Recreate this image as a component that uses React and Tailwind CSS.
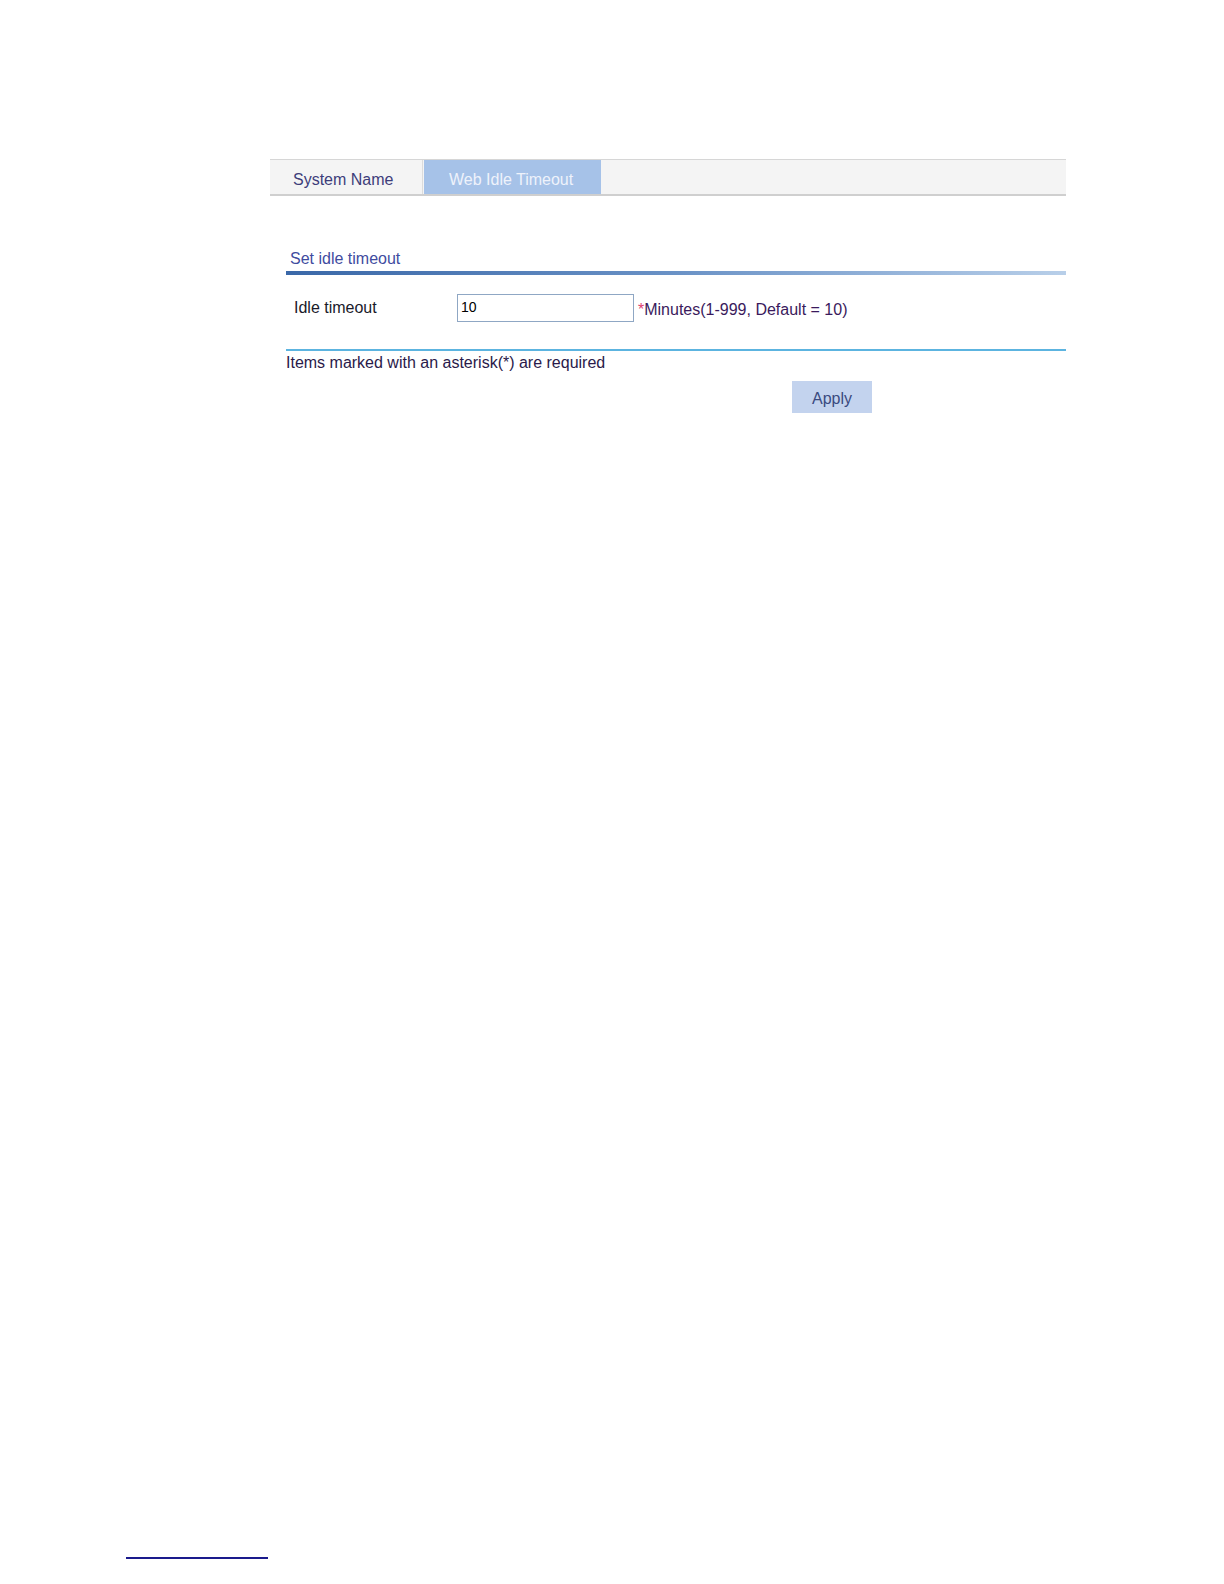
export default function App() {
	return (
		<div className="relative h-[1584px] w-[1224px] bg-white" style={{ fontFamily: '"Liberation Sans", Arial, sans-serif' }}>
			<div className="pl-[270px] pt-[159px]">
				<div className="w-[796px]">
					{/* tabs */}
					<div className="flex h-[37px] border-t border-b-2 border-t-[#d6d6d6] border-b-[#cfcfcf] bg-[#f4f4f4]">
						<div className="flex w-[153px] items-center border-r border-[#dcdcdc] pl-[23px] pt-[6px] text-[16px] text-[#3d3d7a]">System Name</div>
						<div className="ml-[1px] flex w-[177px] items-center bg-[#a6c2e8] pl-[25px] pt-[6px] text-[16px] text-[#eef2fb]">Web Idle Timeout</div>
					</div>

					{/* section */}
					<div className="pl-[16px] pt-[53px]">
						<div className="pl-[4px] text-[16px] leading-[20px] text-[#3f4ca0]">Set idle timeout</div>
						<div className="mt-[2px] h-[4px] bg-gradient-to-r from-[#3a68a8] via-[#6a92c6] to-[#b8cfe9]" />

						<div className="flex items-center pl-[8px] pt-[18px]">
							<div className="w-[163px] text-[16px] text-[#1a1a2a]">Idle timeout</div>
							<input
								defaultValue="10"
								className="h-[28px] w-[177px] border border-[#8fa7c4] px-[3px] pb-[2px] text-[14px] text-black outline-none"
								style={{ fontFamily: '"Liberation Sans", Arial, sans-serif' }}
							/>
							<div className="ml-[4px] pt-[5px] text-[16px] text-[#3a1a5c]">
								<span className="text-[#e04070]">*</span>Minutes(1-999, Default = 10)
							</div>
						</div>

						<div className="mt-[27px] h-[2px] bg-[#5cb4e0]" />
						<div className="pt-[2px] text-[16px] leading-[20px] text-[#2a1a4a]">Items marked with an asterisk(*) are required</div>
						<div className="mt-[8px] flex pl-[506px]">
							<button className="h-[32px] w-[80px] bg-[#c3d3ee] pt-[4px] text-[16px] text-[#3a4a80]">Apply</button>
						</div>
					</div>
				</div>
			</div>

			<div className="absolute left-[126px] top-[1557px] h-[2px] w-[142px] bg-[#1a1a8c]" />
		</div>
	)
}
